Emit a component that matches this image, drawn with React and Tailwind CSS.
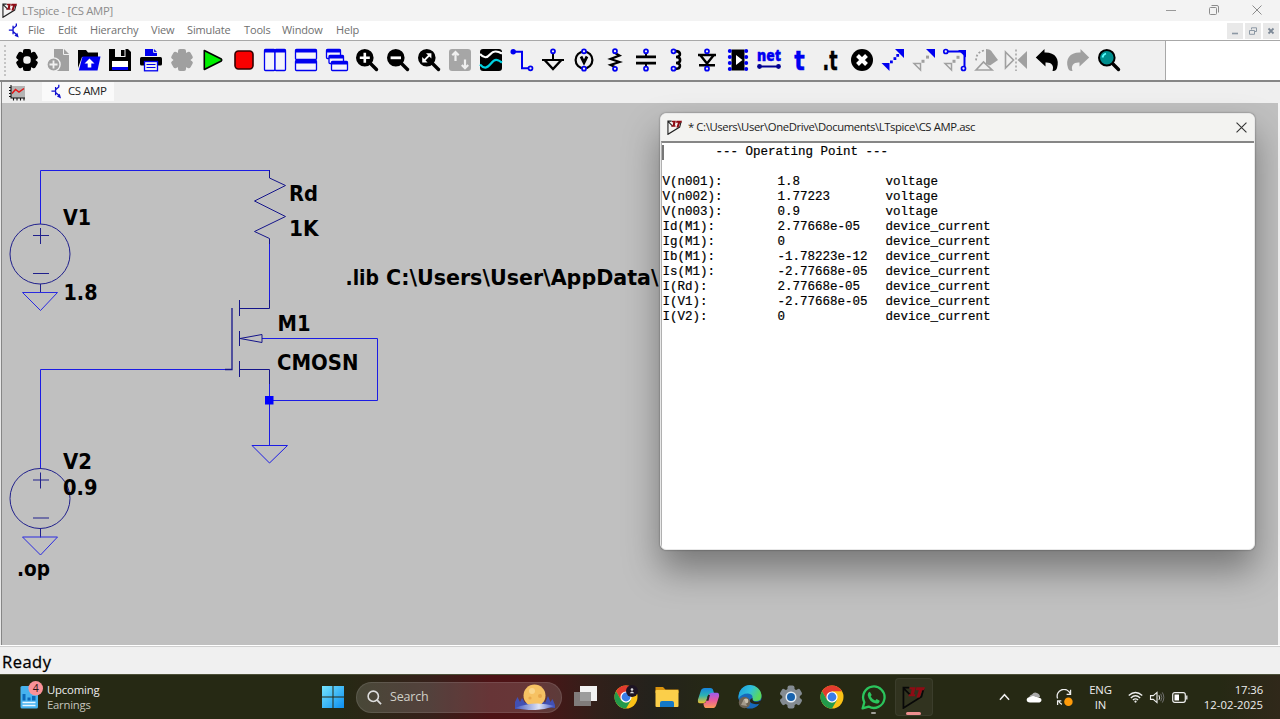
import React from "react";

const INK = "#0000f0";

const Ring = ({ x, y }) => (
  <circle cx={x} cy={y} r="2" fill="#f0f0f0" stroke={INK} strokeWidth="1.7" />
);

const Gear = ({ fill, hole }) => (
  <g>
    {[0, 60, 120].map((a) => (
      <rect key={a} x="8" y="1" width="8" height="22" rx="2" fill={fill} transform={`rotate(${a} 12 12)`} />
    ))}
    <circle cx="12" cy="12" r="8.6" fill={fill} />
    {hole && <rect x="8.3" y="8.3" width="7.4" height="7.4" rx="3" fill="#f0f0f0" />}
  </g>
);

const Lens = ({ children, fill = "#000" }) => (
  <g>
    <path d="M15 15 L21.5 21.5" stroke="#000" strokeWidth="3.4" strokeLinecap="round" />
    <circle cx="9.8" cy="9.8" r="7.8" fill={fill} stroke="#000" strokeWidth="2" />
    {children}
  </g>
);

const Win = ({ x, y, w, h }) => (
  <g>
    <rect x={x} y={y} width={w} height={h} rx="1" fill="#f4f4fb" stroke={INK} strokeWidth="1.3" />
    <rect x={x} y={y} width={w} height="3" fill={INK} />
  </g>
);

const toolIcons = [
  <Gear fill="#000" hole />,
  <g>
    <path d="M8 1 H18 L23 6 V23 H8 Z" fill="#a0a0a0" />
    <path d="M17.5 1 V6.5 H23" fill="none" stroke="#f0f0f0" />
    <circle cx="7.5" cy="16.5" r="6.6" fill="#a0a0a0" stroke="#f0f0f0" strokeWidth="1.4" />
    <path d="M7.5 12.5 V20.5 M3.5 16.5 H11.5" stroke="#f0f0f0" strokeWidth="1.8" />
  </g>,
  <g>
    <path d="M1 2 H9 L11 4.5 H21 V9 H5 L1 20 Z" fill="#000" />
    <path d="M5.5 8.5 H23.5 L20.5 22.5 H1.8 Z" fill={INK} />
    <path d="M12.5 10.5 L17.5 15.5 H14.3 V19.5 H10.7 V15.5 H7.5 Z" fill="#fff" />
  </g>,
  <g>
    <path d="M1 1 H20 L23 4 V23 H1 Z" fill="#000" />
    <rect x="7" y="1" width="10.5" height="8" fill="#f0f0f0" />
    <rect x="13" y="2" width="3.5" height="6" fill="#000" />
    <rect x="4" y="13" width="16" height="6.3" fill="#fff" />
    <rect x="4" y="19" width="16" height="3" fill={INK} />
  </g>,
  <g>
    <path d="M6 1 H15 L18 4 V8 H6 Z" fill={INK} />
    <path d="M14.6 1 V4.4 H18" stroke="#f0f0f0" fill="none" />
    <rect x="1" y="9" width="22" height="8.6" rx="1.5" fill="#000" />
    <rect x="5.5" y="13.5" width="13" height="9.3" fill="#f0f0f0" stroke={INK} strokeWidth="1.3" />
    <path d="M7.5 16.5 H16.5 M7.5 19.5 H16.5" stroke={INK} strokeWidth="1.2" />
  </g>,
  <Gear fill="#a0a0a0" />,
  <path d="M3.3 2.5 L20.3 11 Q21.3 12 20.3 13 L3.3 21.5 Z" fill="#00f000" stroke="#000" strokeWidth="1.6" strokeLinejoin="round" />,
  <rect x="3" y="3" width="18" height="18" rx="3.4" fill="#f80000" stroke="#300" strokeWidth="1.6" />,
  <g><Win x={1.5} y={1.5} w={10.5} h={21} /><Win x={12} y={1.5} w={10.5} h={21} /></g>,
  <g><Win x={1.5} y={1.5} w={21} h={10} /><Win x={1.5} y={12.5} w={21} h={10} /></g>,
  <g><Win x={1.5} y={1.5} w={14} h={9} /><Win x={4} y={7.5} w={14.5} h={8} /><Win x={6.5} y={13.5} w={16} h={9} /></g>,
  <Lens><path d="M9.8 4.8 V14.8 M4.8 9.8 H14.8" stroke="#fff" strokeWidth="2.6" /></Lens>,
  <Lens><path d="M4.6 9.8 H15" stroke="#fff" strokeWidth="2.8" /></Lens>,
  <Lens>
    <path d="M7 12.6 L12.6 7" stroke="#fff" strokeWidth="1.8" />
    <path d="M9 5.2 H14.4 V10.6 Z M5.2 9 V14.4 H10.6 Z" fill="#fff" />
  </Lens>,
  <g>
    <rect x="1" y="1" width="22" height="22" rx="3" fill="#a6a6a6" />
    <path d="M7.5 13 V4 M4.3 7.2 L7.5 4 L10.7 7.2 M17 11.5 V20 M13.8 17 L17 20.2 L20.2 17" fill="none" stroke="#f0f0f0" strokeWidth="2.2" />
  </g>,
  <g>
    <rect x="1" y="1" width="22" height="22" rx="3" fill="#000" />
    <path d="M1 6 C5 10.5 8 10 11 6.500 S17 2 23 5.500" fill="none" stroke="#fff" strokeWidth="2.200" />
    <path d="M1 16.500 C5 21 8 20.500 12 15.500 S18 11 23 14.500" fill="none" stroke="#00d0e0" strokeWidth="2.200" />
  </g>,
  <g>
    <path d="M4 3.8 H12 V20.3 H19" fill="none" stroke={INK} strokeWidth="2" />
    <circle cx="3.2" cy="3.8" r="2.7" fill={INK} />
    <Ring x={20.5} y={20.3} />
  </g>,
  <g>
    <path d="M12 5 V12 M1 12 H23" stroke="#000" strokeWidth="2" />
    <path d="M3.6 12 L12 21 L20.4 12" fill="none" stroke="#000" strokeWidth="2.4" />
    <Ring x={12} y={3.3} />
  </g>,
  <g>
    <circle cx="12" cy="12" r="8.4" fill="none" stroke="#000" strokeWidth="2.2" />
    <path d="M9 8.5 L12 14.5 L15 8.5" fill="none" stroke="#000" strokeWidth="2.8" />
    <Ring x={12} y={3.3} /><Ring x={12} y={20.7} />
  </g>,
  <g>
    <path d="M12 5 L16.500 7.500 L7.500 11 L16.500 14 L7.500 17 L12 19" fill="none" stroke="#000" strokeWidth="2.2" />
    <Ring x={12} y={3.2} /><Ring x={12} y={20.8} />
  </g>,
  <g>
    <path d="M12 5 V8 M12 16 V19" stroke="#000" strokeWidth="2" />
    <path d="M2 8.8 H22 M2 15.2 H22" stroke="#000" strokeWidth="2.8" />
    <Ring x={12} y={3.3} /><Ring x={12} y={20.7} />
  </g>,
  <g>
    <path d="M10.500 3.200 C17.500 2.500 17.500 9 12 9 C17.500 9 17.500 15 12 15 C17.500 15 17.500 21.500 10.500 20.800" fill="none" stroke="#000" strokeWidth="2.6" />
    <Ring x={9.5} y={3.3} /><Ring x={9.5} y={20.7} />
  </g>,
  <g>
    <path d="M3 7 H21 M4 17.3 H20" stroke="#000" strokeWidth="2.4" />
    <path d="M5.2 7 L12 15.6 L18.8 7" fill="none" stroke="#000" strokeWidth="2.4" />
    <Ring x={12} y={3.3} /><Ring x={12} y={20.7} />
  </g>,
  <g>
    <rect x="5.5" y="1.5" width="13" height="21" fill="#000" />
    <path d="M10 7 L16.5 12 L10 17 Z" fill="#fff" />
    {[3, 9, 15, 21].map((y) => (
      <g key={y}>
        <circle cx="3.8" cy={y} r="2" fill={INK} />
        <circle cx="20.2" cy={y} r="2" fill={INK} />
      </g>
    ))}
  </g>,
  <g>
    <text x="12" y="13.4" textAnchor="middle" textLength="24" lengthAdjust="spacingAndGlyphs" className="font-['Open_Sans'] text-[15px] font-extrabold" fill={INK} stroke={INK} strokeWidth="0.4">net</text>
    <path d="M3 18.500 H21" stroke="#000090" strokeWidth="2" />
    <circle cx="2.500" cy="18.500" r="2.400" fill="#000090" /><circle cx="21.500" cy="18.500" r="2.400" fill="#000090" />
  </g>,
  <text x="11.500" y="21.500" textAnchor="middle" className="font-['DejaVu_Sans'] text-[27px] font-bold" textLength="10.500" lengthAdjust="spacingAndGlyphs" fill={INK} stroke={INK} strokeWidth="0.500">t</text>,
  <text x="11" y="21.500" textAnchor="middle" className="font-['DejaVu_Sans'] text-[27px] font-bold" textLength="15" lengthAdjust="spacingAndGlyphs" stroke="#000" strokeWidth="0.400">.t</text>,
  <g>
    <circle cx="12" cy="12" r="11" />
    <path d="M7.500 7.500 L16.500 16.500 M16.500 7.500 L7.500 16.500" stroke="#fff" strokeWidth="4" />
  </g>,
  <g fill={INK}>
    <path d="M14 1 H23 V10 Z M0.500 15 H8.500 V23 Z" />
    <rect x="9" y="12.500" width="2.800" height="2.800" /><rect x="12.500" y="9.200" width="2.800" height="2.800" /><rect x="15.300" y="6" width="2.800" height="2.800" />
  </g>,
  <g>
    <path d="M14 1 H23 V10 Z" fill={INK} />
    <path d="M2 15.500 H8.500 V22 Z" fill="none" stroke="#a0a0a0" strokeWidth="1.500" />
    <rect x="9.500" y="11.800" width="3" height="3" fill="#a0a0a0" /><rect x="14" y="7.600" width="3" height="3" fill="#a0a0a0" />
  </g>,
  <g>
    <path d="M3 3.500 H21.500 V20" fill="none" stroke={INK} strokeWidth="2" />
    <path d="M15 2 H23 V9.500 Z" fill={INK} />
    <path d="M2 15.500 H8.500 V22 Z" fill="none" stroke="#a0a0a0" strokeWidth="1.500" />
    <rect x="9.500" y="11.800" width="3" height="3" fill="#a0a0a0" /><rect x="13.500" y="7.800" width="3" height="3" fill="#a0a0a0" />
    <Ring x={2.8} y={3.5} /><Ring x={20.5} y={20.5} />
  </g>,
  <g>
    <path d="M12 1 C17 1 18 4 19.500 6 L24 12 L16 17.500 L12 16 Z" fill="#a0a0a0" />
    <path d="M10 2.500 C4 4 2 7 2 14" fill="none" stroke="#a0a0a0" strokeWidth="1.800" strokeDasharray="2 2" />
    <path d="M2 22 L9.500 14 L18 22 Z" fill="#f0f0f0" stroke="#a0a0a0" strokeWidth="1.700" />
  </g>,
  <g>
    <path d="M1.500 4 L9.500 12 L1.500 20 Z" fill="none" stroke="#a0a0a0" strokeWidth="1.600" />
    <path d="M23 3 L13.500 12 L23 21 Z" fill="#a0a0a0" />
    <path d="M12 1.500 V23" stroke="#a0a0a0" strokeWidth="1.500" strokeDasharray="2 2" />
  </g>,
  <path d="M0.800 9.500 L9.500 1 V4.500 C20 4 25 11 22 20 Q21 23.500 17.500 23 C19.500 17 16 14 10.500 14.500 V18.500 Z" />,
  <path d="M23.200 9.500 L14.500 1 V4.500 C4 4 -1 11 2 20 Q3 23.500 6.500 23 C4.500 17 8 14 13.500 14.500 V18.500 Z" fill="#a0a0a0" />,
  <Lens fill="#008e8e"><path d="M5.500 9.500 Q6 6.500 9 5.500" stroke="#5ff" strokeWidth="1.800" fill="none" /></Lens>,
];

const menus = [
  ["File", "w-[30px]"],
  ["Edit", "w-[32px]"],
  ["Hierarchy", "w-[61px]"],
  ["View", "w-[36px]"],
  ["Simulate", "w-[57px]"],
  ["Tools", "w-[38px]"],
  ["Window", "w-[54px]"],
  ["Help", "w-[40px]"],
];

const rows = [
  ["V(n001):", "1.8", "voltage"],
  ["V(n002):", "1.77223", "voltage"],
  ["V(n003):", "0.9", "voltage"],
  ["Id(M1):", "2.77668e-05", "device_current"],
  ["Ig(M1):", "0", "device_current"],
  ["Ib(M1):", "-1.78223e-12", "device_current"],
  ["Is(M1):", "-2.77668e-05", "device_current"],
  ["I(Rd):", "2.77668e-05", "device_current"],
  ["I(V1):", "-2.77668e-05", "device_current"],
  ["I(V2):", "0", "device_current"],
];

const Logo = ({ className, edge = "#222" }) => (
  <svg viewBox="0 0 16 16" className={className}>
    <path d="M5 1.200 H1 V15.300 L13.500 7.500 L15 2 M1 1.500 L6 6.500" fill="none" stroke={edge} strokeWidth="1.200" />
    <path d="M5.500 0.800 H9.500 L8.300 5.800 H9.300 L9 7.200 H4.500 L4.800 5.800 H6 L6.700 2.300 H5.200 Z M10 0.800 H16 L15.300 3 H14 L12.300 8 H10 L11.700 3 H9.600 Z" fill="#8e0b14" />
  </svg>
);

const Transistor = ({ className }) => (
  <svg viewBox="0 0 12 16" className={className}>
    <path d="M0.500 7.500 H5 M5 3 V12 M5 6 L8.500 3 V0.500 M5 9 L9.500 13" fill="none" stroke="#1010d0" strokeWidth="1.400" />
    <path d="M11 15.500 L6.500 13.500 L9.500 10.500 Z" fill="#1010d0" />
  </svg>
);

const labels = [
  ["V1", 63, 224.5, 28],
  ["1.8", 63.5, 300, 34],
  ["Rd", 289, 201, 29],
  ["1K", 289, 236, 29.5],
  [".lib", 345.5, 285, 33.5],
  ["C:\\Users\\User\\AppData\\", 386, 285, 272.5],
  ["M1", 277.5, 331, 33],
  ["CMOSN", 277, 369.5, 81.5],
  ["V2", 63, 469, 29],
  ["0.9", 63, 495, 34.5],
  [".op", 17, 575.5, 33],
];

const Source = ({ cy }) => (
  <g>
    <circle cx="40" cy={cy} r="30" stroke="#20208c" />
    <path d={`M33 ${cy - 18.5} h16 M40.5 ${cy - 26} v16 M33 ${cy + 19.5} h16`} stroke="#20208c" />
    <path d={`M40.5 ${cy + 30} v9`} stroke="#20208c" />
    <path d={`M22.5 ${cy + 38.5} h35 L40.500 ${cy + 56.5} Z`} stroke="#2a2ae0" />
  </g>
);

const Schematic = () => (
  <svg viewBox="2 103 1276 542" className="block h-[542px] w-[1276px]" fill="none" strokeWidth="1">
    <g stroke="#1c1ce4">
      <path d="M40.500 224 V170.500 H269.500" />
      <path d="M269.500 300 V244" />
      <path d="M40.500 468 V369.500 H226" />
      <path d="M262 338.500 H377.500 V400.500 H269.500 M269.500 384 V445" />
      <path d="M252 445.500 H287.500 L269.500 463 Z" />
    </g>
    <g stroke="#14148a">
      <path d="M269.500 170 V178 L285.500 185.500 L254.500 201 L285.500 216.500 L254.500 231.500 L269.500 238.500 V244" />
      <path d="M232 308 V369.500 H225" strokeWidth="1.300" />
      <path d="M239.500 300 V316 M239.500 331 V346 M239.500 361 V377 M239.500 308.500 H269.500 V300 M239.500 369.500 H269.500 V384" />
      <path d="M240 338.500 L262 334.500 V342.500 Z" />
    </g>
    <Source cy={254} />
    <Source cy={498.5} />
    <rect x="265" y="396" width="8.500" height="8.500" fill="#0000ff" />
    {labels.map(([t, x, y, w]) => (
      <text key={t} x={x} y={y} textLength={w} lengthAdjust="spacingAndGlyphs" fill="#000" className="font-['DejaVu_Sans'] text-[21.300px] font-bold">
        {t}
      </text>
    ))}
  </svg>
);

const Chrome = ({ children }) => (
  <svg viewBox="0 0 24 24" className="size-[24px]">
    <circle cx="12" cy="12" r="11.500" fill="#fbc116" />
    <path d="M12 12 L2.040 6.250 A11.500 11.500 0 0 1 21.960 6.250 H12 Z" fill="#e33b2e" />
    <path d="M2.040 6.250 L7 14.900 L12 12 V6.250 Z" fill="#e33b2e" />
    <path d="M2.040 6.250 L7 14.900 L12 17.700 L17 14.900 L12 23.500 A11.500 11.500 0 0 1 2.040 6.250" fill="#229a4b" />
    <circle cx="12" cy="12" r="5.600" fill="#fff" />
    <circle cx="12" cy="12" r="4.400" fill="#3a7de8" />
    {children}
  </svg>
);

const Taskbar = () => (
  <footer className="flex h-[45px] w-full shrink-0 items-center border-t border-[#4c5038] bg-[linear-gradient(90deg,#262914_0px,#262914_340px,#36201a_430px,#4d1215_490px,#4d1416_530px,#30201a_600px,#24221c_650px,#262914_720px,#262914_1220px,#30281a_1280px)] font-['Open_Sans',sans-serif] text-[#eee]">
    <div className="flex w-[322px] items-center pl-5">
      <svg viewBox="0 0 24 28" className="mb-[4px] h-[28px] w-[24px]">
        <rect x="0.500" y="5" width="17.500" height="22.500" rx="1.500" fill="#46b2ee" />
        <path d="M2.500 13 H5.500 V19.500 H2.500 Z M7.500 16.500 H10.500 V19.500 H7.500 Z M12 15 H15.500 V19.500 H12 Z" fill="#0c69b8" />
        <path d="M2.500 21.500 H15.500 M2.500 24.500 H15.500" stroke="#e9f7ff" strokeWidth="1.600" />
        <circle cx="15.700" cy="7.300" r="7.300" fill="#fb9299" />
        <text x="15.700" y="11" textAnchor="middle" fontSize="10.500" fill="#2a1515">4</text>
      </svg>
      <div className="ml-[3px] pb-px text-[11.300px] leading-[15px] tracking-[-0.170px]">
        <div>Upcoming</div>
        <div className="text-[#c5c5bd] tracking-[-0.230px]">Earnings</div>
      </div>
    </div>
    <svg viewBox="0 0 22 22" className="size-[22px] shrink-0">
      <defs>
        <linearGradient id="win" x1="0" y1="0" x2="1" y2="1"><stop offset="0" stopColor="#74e4fd" /><stop offset="1" stopColor="#0c8ef0" /></linearGradient>
      </defs>
      <path d="M0 0 H10.500 V10.500 H0 Z M11.500 0 H22 V10.500 H11.500 Z M0 11.500 H10.500 V22 H0 Z M11.500 11.500 H22 V22 H11.500 Z" fill="url(#win)" />
    </svg>
    <div className="ml-[12px] flex h-[31px] w-[206px] items-center rounded-full border border-white/10 bg-white/15 pl-[10px]">
      <svg viewBox="0 0 16 16" className="size-[15px]"><circle cx="6.700" cy="6.700" r="5.500" fill="none" stroke="#ddd" strokeWidth="1.700" /><path d="M10.800 10.800 L15 15" stroke="#ddd" strokeWidth="1.900" /></svg>
      <span className="ml-[8px] text-[12.500px] tracking-[-0.200px] text-[#d0d0c8]">Search</span>
      <svg viewBox="0 0 42 26" className="ml-auto mr-[5px] h-[26px] w-[42px]">
        <defs>
          <linearGradient id="snow"><stop offset="0" stopColor="#4158c0" /><stop offset="0.600" stopColor="#dfe4f5" /><stop offset="1" stopColor="#4056c4" /></linearGradient>
        </defs>
        <path d="M1 24 V18 L3.500 13 L6 18 L8 14 L11 19 L14 17 V25 H1 Z M27 23 L29 16 L31 19 L34 12 L36.500 18 L38.500 15 L41 21 V24 Z" fill="#4150b4" />
        <circle cx="20.500" cy="11.500" r="11" fill="#f6c263" />
        <circle cx="18" cy="7" r="3" fill="#fad68c" /><circle cx="26" cy="12" r="2" fill="#e9a84c" /><circle cx="16" cy="14" r="1.600" fill="#e9a84c" />
        <path d="M1 24 Q20 16 41 22 Q22 29 1 24 Z" fill="url(#snow)" />
      </svg>
    </div>
    <div className="ml-[2.500px] flex items-center">
      <div className="flex w-[41.200px] justify-center">
        <svg viewBox="0 0 24 24" className="size-[24px]"><rect x="7" y="1" width="17" height="15" fill="#f2f2f2" /><rect x="1" y="7" width="17" height="14" fill="#8d8d8d" fillOpacity="0.850" /></svg>
      </div>
      <div className="flex w-[41.200px] justify-center">
        <Chrome><circle cx="18" cy="6" r="6" fill="#1d1424" /><circle cx="18" cy="4.500" r="1.300" fill="#ddd" /><path d="M15.800 8.300 Q18 4.500 20.200 8.300 Z" fill="#ddd" /></Chrome>
      </div>
      <div className="flex w-[41.200px] justify-center">
        <svg viewBox="0 0 24 24" className="size-[24px]">
          <path d="M0.500 2 H8 L10.500 4.500 H23.500 V8 H0.500 Z" fill="#d9930d" /><rect x="0.500" y="5" width="23" height="17" rx="1" fill="#fbcf4a" />
          <path d="M5 22 V18 Q5 16 7 16 H17 Q19 16 19 18 V22 Z" fill="#1478c8" />
        </svg>
      </div>
      <div className="flex w-[41.200px] justify-center">
        <svg viewBox="0 0 24 24" className="size-[23px]">
          <defs>
            <linearGradient id="cpa" x1="0" y1="0" x2="0" y2="1"><stop offset="0" stopColor="#1583e0" /><stop offset="0.500" stopColor="#2eb3b0" /><stop offset="1" stopColor="#f0c02a" /></linearGradient>
            <linearGradient id="cpb" x1="0" y1="0" x2="0" y2="1"><stop offset="0" stopColor="#9a5cf0" /><stop offset="0.500" stopColor="#e85a9c" /><stop offset="1" stopColor="#fb9a56" /></linearGradient>
          </defs>
          <path d="M8 2 H14 Q16.500 2 17 5 L18 8 H14 Q12 8 11 11 L9.500 16 Q8.500 18 6 18 H3 Q0.500 18 1 14 L4 5 Q5 2 8 2 Z" fill="url(#cpa)" />
          <path d="M16 23 H10 Q7.500 23 7 20 L6.600 18 Q9 18 10 15 L12 10 Q13 7 16 7 H21 Q23.500 7 23 11 L20 20 Q19 23 16 23 Z" fill="url(#cpb)" />
          <path d="M11.500 9.500 L13.500 9.500 L12 15.500 L10 15.500 Z" fill="#25241c" />
        </svg>
      </div>
      <div className="flex w-[41.200px] justify-center">
        <svg viewBox="0 0 24 24" className="size-[24px]">
          <defs>
            <linearGradient id="edge" x1="0" y1="0" x2="1" y2="0.400"><stop offset="0" stopColor="#1c9ade" /><stop offset="0.550" stopColor="#2fc0dc" /><stop offset="1" stopColor="#5bd85c" /></linearGradient>
          </defs>
          <circle cx="12" cy="12" r="11.500" fill="#1769bc" />
          <path d="M0.500 12 A11.500 11.500 0 0 1 23.500 11 Q23.500 16 18 16 Q14 16 14.500 13 Q15 9 10 8.500 Q3 8.500 0.500 14 Z" fill="url(#edge)" />
          <path d="M14.500 13 Q14 17 18.500 16.800 Q21 17 23.500 15 L22.500 18.500 Q17 20 13 18 Q10 15 14.500 13 Z" fill="#25271a" />
          <circle cx="6.500" cy="17.500" r="5.700" fill="#6c6255" /><circle cx="8" cy="16" r="2.400" fill="#c9bfae" /><path d="M3 20 L6 14 L9 21 Z" fill="#a49a8c" />
        </svg>
      </div>
      <div className="flex w-[41.200px] justify-center">
        <svg viewBox="0 0 24 24" className="size-[24px]">
          {[0, 60, 120].map((a) => (<rect key={a} x="8.500" y="0.500" width="7" height="23" rx="2" fill="#848b92" transform={`rotate(${a} 12 12)`} />))}
          <circle cx="12" cy="12" r="8.800" fill="#848b92" /><circle cx="12" cy="12" r="5.500" fill="#e4edf5" /><circle cx="12" cy="12" r="4" fill="#1762ae" />
        </svg>
      </div>
      <div className="flex w-[41.200px] justify-center"><Chrome /></div>
      <div className="relative flex w-[41.200px] justify-center">
        <svg viewBox="0 0 24 24" className="size-[25px]">
          <path d="M1.500 22.500 L3.200 16.500 A10.300 10.300 0 1 1 7.300 20.700 Z" fill="none" stroke="#2bc45c" strokeWidth="2.200" strokeLinejoin="round" />
          <path d="M8.500 6.500 L10.300 9.500 L9.300 11 Q10.800 13.800 13.600 14.800 L15 13.500 L18 15 Q17.500 18 14.500 17.800 Q7.500 16 6.400 9.500 Q6.500 7 8.500 6.500 Z" fill="#2bc45c" />
        </svg>
        <span className="absolute bottom-[-4px] h-[2px] w-[5px] rounded-full bg-[#a0a098]" />
      </div>
      <div className="relative ml-[1px] flex h-[38px] w-[37.500px] items-center justify-center rounded-[4px] border border-white/5 bg-white/5">
        <Logo className="size-[23px]" edge="#080808" />
        <span className="absolute bottom-[0px] h-[3px] w-[15px] rounded-full bg-[#ee9090]" />
      </div>
    </div>
    <div className="ml-auto flex items-center pr-[17px] text-[11.500px]">
      <svg viewBox="0 0 12 8" className="h-[8px] w-[11px]"><path d="M1 7 L6 1.500 L11 7" fill="none" stroke="#eee" strokeWidth="1.600" /></svg>
      <svg viewBox="0 0 16 12" className="ml-[16px] h-[12px] w-[16px]"><path d="M3 8 Q3 4 6 3.500 Q8 0.500 11 2 Q14 3 14 6 Z" fill="#aaa" /><path d="M4 11.500 Q0.500 11.500 0.700 8.500 Q1 6 4.500 6 Q7 4 9.500 6 Q12 5.500 15 7.500 Q16.500 10.500 13.500 11.500 Z" fill="#fff" /></svg>
      <svg viewBox="0 0 16 16" className="ml-[14px] size-[17px]">
        <path d="M1.500 9 A6.300 6.300 0 0 1 13.500 4.500 M13.700 0.800 V5 H10 M5.500 14.500 A6.300 6.300 0 0 1 2.500 11 M1.500 15 V11.200 H5" fill="none" stroke="#eee" strokeWidth="1.200" />
        <circle cx="11.700" cy="12" r="4" fill="#ff9b0a" />
      </svg>
      <div className="ml-[16px] w-[23px] text-center text-[11.300px] leading-[15px] tracking-[-0.200px]"><div>ENG</div><div>IN</div></div>
      <svg viewBox="0 0 16 12" className="ml-[16px] h-[12px] w-[15px]"><path d="M0.800 4.500 Q8 -2 15.200 4.500 M3 7 Q8 2.300 13 7 M5.200 9.200 Q8 6.700 10.800 9.200" fill="none" stroke="#eee" strokeWidth="1.400" /><circle cx="8" cy="10.800" r="1.200" fill="#eee" /></svg>
      <svg viewBox="0 0 16 14" className="ml-[6px] h-[13px] w-[16px]"><path d="M1 5 H4 L8 1.500 V12.500 L4 9 H1 Z" fill="none" stroke="#eee" strokeWidth="1.200" /><path d="M10 4.500 Q11.500 7 10 9.500" fill="none" stroke="#eee" strokeWidth="1.200" /><path d="M12 3 Q14.500 7 12 11 M13.700 1.500 Q17 7 13.700 12.500" fill="none" stroke="#777" /></svg>
      <svg viewBox="0 0 16 11" className="ml-[7px] h-[11px] w-[16px]"><rect x="0.700" y="0.700" width="12.600" height="9.600" rx="2" fill="none" stroke="#eee" strokeWidth="1.200" /><rect x="2.500" y="2.500" width="4.500" height="6" fill="#fff" /><path d="M14.800 3.500 V7.500" stroke="#eee" strokeWidth="1.300" /></svg>
      <div className="ml-[15px] w-[60px] pb-px text-right text-[11.300px] leading-[15px] whitespace-nowrap"><div className="tracking-[-0.100px]">17:36</div><div className="tracking-[0.020px]">12-02-2025</div></div>
    </div>
  </footer>
);

export default function App() {
  return (
    <div className="relative flex h-[719px] w-[1280px] flex-col overflow-hidden bg-[#f0f0f0] font-['Open_Sans',sans-serif]">
      <header className="flex h-[21px] shrink-0 items-center bg-[#f3f3f3] pl-[2px] pr-[18px] text-[#8c8c8c]">
        <Logo className="size-[15px]" />
        <span className="ml-[5px] pt-px text-[11.300px] tracking-[-0.300px]">LTspice - [CS AMP]</span>
        <div className="ml-auto flex items-center gap-[33px] pb-[2px]">
          <svg viewBox="0 0 10 10" className="size-[10px]"><path d="M0 5.500 H10" stroke="#999" /></svg>
          <svg viewBox="0 0 10 10" className="size-[10px]"><rect x="0.500" y="2.500" width="7" height="7" rx="1" fill="none" stroke="#8c8c8c" /><path d="M2.500 0.500 H8 Q9.500 0.500 9.500 2 V7.500" fill="none" stroke="#8c8c8c" /></svg>
          <svg viewBox="0 0 10 10" className="size-[10px]"><path d="M0.500 0.500 L9.500 9.500 M9.500 0.500 L0.500 9.500" stroke="#8c8c8c" /></svg>
        </div>
      </header>
      <nav className="flex h-[20px] shrink-0 items-center border-b border-[#a8a8a8] bg-white pl-[8px] text-[11px] tracking-[-0.150px] text-[#707070]">
        <Transistor className="mr-[8px] h-[15px] w-[12px]" />
        {menus.map(([m, w]) => (<span key={m} className={w}>{m}</span>))}
        <div className="ml-auto flex gap-[2px] pr-[1px]">
          <span className="flex h-[16px] w-[16px] items-center justify-center bg-[#e9e9e9]"><svg viewBox="0 0 8 8" className="size-[8px]"><path d="M1 6.500 H7" stroke="#8c98a4" strokeWidth="1.600" /></svg></span>
          <span className="flex h-[16px] w-[16px] items-center justify-center bg-[#e9e9e9]"><svg viewBox="0 0 8 8" className="size-[8px]"><path d="M2.500 2.500 V0.800 H7.500 V4.500 H5.500 M0.500 3.500 H5.500 V7.300 H0.500 Z" fill="none" stroke="#8c98a4" /></svg></span>
          <span className="flex h-[16px] w-[16px] items-center justify-center bg-[#e9e9e9]"><svg viewBox="0 0 8 8" className="size-[8px]"><path d="M1.500 1.500 L6.500 6.500 M6.500 1.500 L1.500 6.500" stroke="#7c8896" strokeWidth="1.800" /></svg></span>
        </div>
      </nav>
      <div className="flex h-[39px] shrink-0 bg-white">
        <div className="flex w-[1166px] items-center border-r border-[#a8a8a8] bg-[#f0f0f0] pb-px pl-[4px]">
          <div className="h-[31px] w-[2px] border-l-2 border-dotted border-[#c4c4c4]" />
          <div className="ml-[6px] flex">
            {toolIcons.map((icon, i) => (
              <div key={i} className="flex w-[30.910px] justify-center">
                <svg viewBox="0 0 24 24" className="size-[24px] overflow-visible">{icon}</svg>
              </div>
            ))}
          </div>
        </div>
      </div>
      <div className="flex h-[23px] shrink-0 items-stretch border-t-2 border-[#868686] bg-[#efefef]">
        <div className="w-[2px] border-r border-[#868686]" />
        <div className="flex w-[40px] items-center pl-[7px]">
          <svg viewBox="0 0 16 16" className="size-[16px]">
            <rect x="2" y="1" width="14" height="12" fill="#b4b4b4" />
            <path d="M2 0 V13 H16 M0 2.500 H2 M0 5.500 H2 M0 8.500 H2 M0 11.500 H2 M4.500 13 V15.500 M8 13 V15.500 M11.500 13 V15.500 M15 13 V15.500" stroke="#111" fill="none" strokeWidth="1.100" />
            <path d="M3 8.500 L6.500 4.500 L10 7 L15 3.500" fill="none" stroke="#e31616" strokeWidth="1.500" />
          </svg>
        </div>
        <div className="mb-[2px] flex w-[72px] items-center bg-[#fafafa] pb-px pl-[9px]">
          <Transistor className="h-[15px] w-[11px]" />
          <span className="ml-[6px] whitespace-nowrap text-[11.500px] tracking-[-0.450px] text-[#222]">CS AMP</span>
        </div>
      </div>
      <main className="flex h-[542px] shrink-0 overflow-hidden bg-[#c0c0c0]">
        <div className="w-[2px] shrink-0 border-r border-[#868686] bg-[#e8e8e8]" />
        <Schematic />
        <div className="w-[2px] bg-[#f4f4f4]" />
      </main>
      <div className="flex h-[29px] shrink-0 items-center border-t border-white bg-[#f0f0f0] pt-[5px] pl-[2px] shadow-[inset_0_2px_0_-1px_#cfcfcf]">
        <span className="text-[16.500px] font-medium tracking-[0.500px] text-black [-webkit-text-stroke:0.300px_#000]">Ready</span>
      </div>
      <Taskbar />

      <div className="pointer-events-none absolute inset-x-0 top-[82px] bottom-[45px] overflow-hidden">
        <section className="absolute top-[31px] left-[660px] flex h-[437px] w-[595px] flex-col overflow-hidden rounded-[6px] border border-[#e8e8e8] bg-white shadow-[0_20px_36px_0px_rgba(0,0,0,0.38),0_0_2px_rgba(0,0,0,0.45)]">
          <div className="flex h-[27px] shrink-0 items-center bg-[#f3f3f1] pl-[6px] pr-[7px]">
            <Logo className="size-[15px]" />
            <span className="ml-[6px] text-[11.300px] tracking-[-0.400px] whitespace-nowrap text-[#1c1c1c]">* C:\Users\User\OneDrive\Documents\LTspice\CS AMP.asc</span>
            <svg viewBox="0 0 10 10" className="ml-auto size-[11px]"><path d="M0.500 0.500 L9.500 9.500 M9.500 0.500 L0.500 9.500" stroke="#333" /></svg>
          </div>
          <div className="grow border-t-2 border-l border-[#868686] border-l-[#b0b0b0] pt-[2px] font-['Liberation_Mono',monospace] text-[12.500px] leading-[15px] text-black [-webkit-text-stroke:0.200px_#000]">
            <div className="flex h-[15px] whitespace-pre"><span className="h-[15px] w-[1.500px] bg-[#777]" /><span className="pl-[52px]">--- Operating Point ---</span></div>
            <div className="h-[15px]" />
            {rows.map(([a, b, c]) => (
              <div key={a} className="grid h-[15px] grid-cols-[115px_108px_1fr] pl-[0.500px]"><span>{a}</span><span>{b}</span><span>{c}</span></div>
            ))}
          </div>
        </section>
      </div>
    </div>
  );
}
